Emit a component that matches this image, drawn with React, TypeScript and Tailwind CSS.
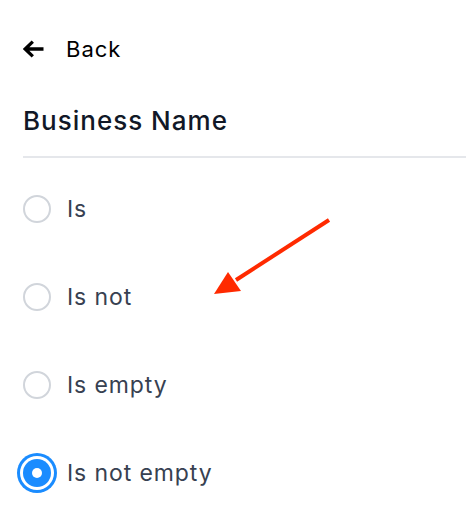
import { useState } from 'react';

const options = ['Is', 'Is not', 'Is empty', 'Is not empty'];

export default function App() {
  const [selected, setSelected] = useState('Is not empty');

  return (
    <div
      className="relative h-[514px] w-[466px] overflow-hidden bg-white pl-[23px]"
      style={{ fontFamily: 'Inter, "Noto Sans", sans-serif' }}
    >
      {/* Back link */}
      <button className="mt-[40px] flex h-[18px] items-center gap-[22px] text-[22px] tracking-[1px] text-gray-900">
        <svg width="21" height="18" viewBox="0 0 21 18" fill="none">
          <path
            d="M20.5 9H2.5M9.8 1.6L2.2 9l7.6 7.4"
            stroke="#000"
            strokeWidth="3.3"
            strokeLinejoin="miter"
          />
        </svg>
        <span className="leading-none text-black">Back</span>
      </button>

      <h1 className="mt-[47px] text-[26px] leading-[32px] font-medium tracking-[1px] text-[#111827]">
        Business Name
      </h1>
      <div className="mt-[19px] h-[2px] bg-[#e5e7eb]" />

      {/* Condition options */}
      <div className="mt-[7px] flex flex-col">
        {options.map((opt) => {
          const checked = selected === opt;
          return (
            <label
              key={opt}
              onClick={() => setSelected(opt)}
              className="flex h-[88px] cursor-pointer items-center gap-[16px]"
            >
              {checked ? (
                <span className="flex h-[28px] w-[28px] items-center justify-center rounded-full bg-[#1a8cff] ring-[3px] ring-[#1a8cff] ring-offset-[3px]">
                  <span className="h-[10px] w-[10px] rounded-full bg-white" />
                </span>
              ) : (
                <span className="h-[28px] w-[28px] rounded-full border-2 border-[#d1d5db] bg-white" />
              )}
              <span className="text-[23px] tracking-[0.9px] text-[#374151]">{opt}</span>
            </label>
          );
        })}
      </div>

      {/* Annotation arrow */}
      <svg
        className="pointer-events-none absolute left-0 top-0"
        width="466"
        height="514"
        viewBox="0 0 466 514"
      >
        <line x1="329" y1="220" x2="236" y2="280" stroke="#ff2a00" strokeWidth="4" />
        <polygon points="214,294 228,272 241,291" fill="#ff2a00" />
      </svg>
    </div>
  );
}
